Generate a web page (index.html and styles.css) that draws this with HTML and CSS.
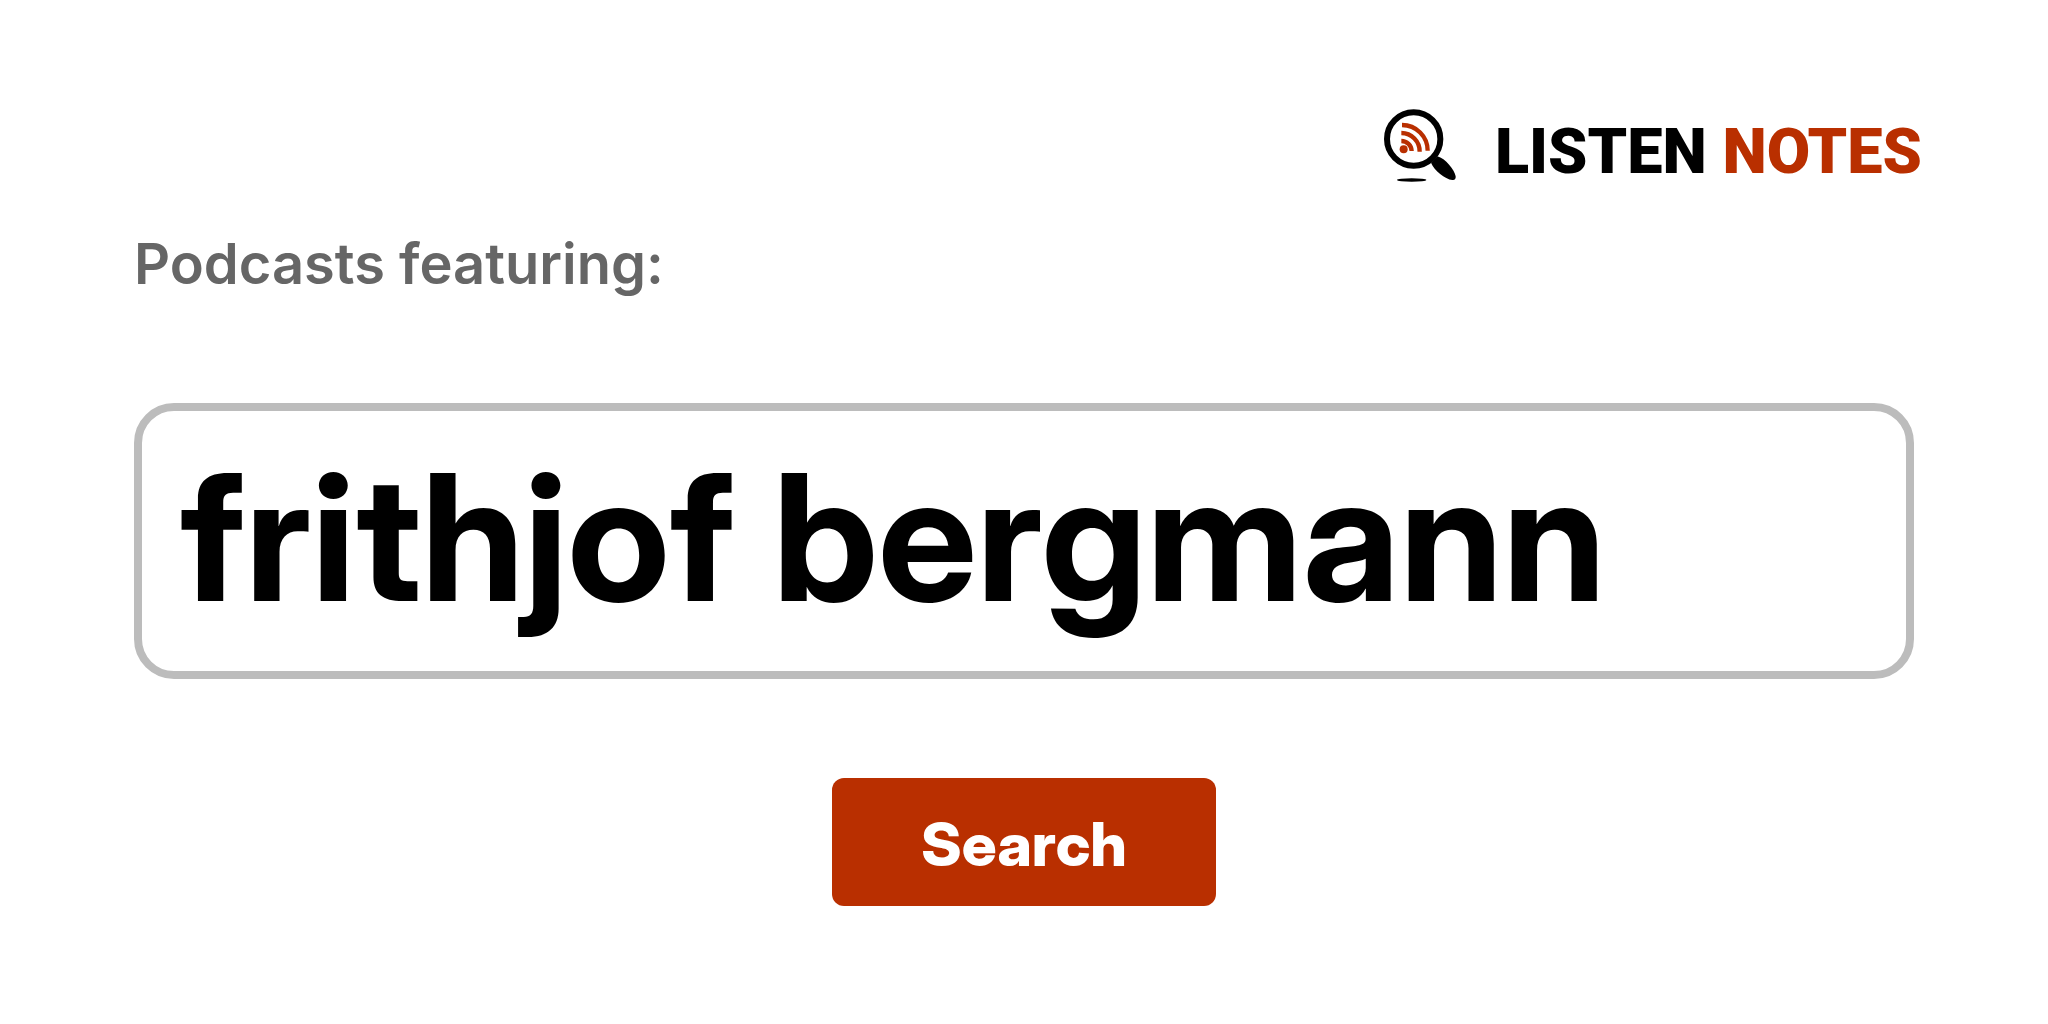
FILE: index.html
```html
<!DOCTYPE html>
<html lang="en">
<head>
<meta charset="utf-8">
<meta name="viewport" content="width=device-width, initial-scale=1">
<title>Podcasts featuring: frithjof bergmann - Listen Notes</title>
<link rel="stylesheet" href="styles.css">
</head>
<body>
<header class="header">
  <a class="logo" href="#" aria-label="Listen Notes">
    <svg class="logo-icon" viewBox="42 42 216 219" aria-hidden="true">
      <path d="M183 203L202 184C226 190 254 225 257 244C258 252 254 256 247 255C225 252 193 227 183 203Z"/>
      <circle cx="131" cy="132" r="80" fill="#fff" stroke="#000" stroke-width="18"/>
      <ellipse cx="125" cy="255" rx="44" ry="5"/>
      <g fill="none" stroke="#b92f00" stroke-width="13">
        <path d="M96 90A77 77 0 0 1 173 167"/>
        <path d="M94 114A55 55 0 0 1 149 170"/>
        <path d="M94 138A31 31 0 0 1 125 168"/>
      </g>
      <circle cx="101" cy="163" r="12" fill="#b92f00"/>
    </svg>
    <span class="logo-text">LISTEN <span class="logo-accent">NOTES</span></span>
  </a>
</header>
<main>
  <form class="search">
    <label class="search-label" for="query">Podcasts featuring:</label>
    <input class="search-input" id="query" type="text" value="frithjof bergmann">
    <button class="search-button" type="submit">Search</button>
  </form>
</main>
</body>
</html>
```
FILE: styles.css
```css
* {
  box-sizing: border-box;
}

body {
  margin: 0;
  background: #fff;
  color: #000;
  font-family: Inter, "Liberation Sans", sans-serif;
}

.header {
  display: flex;
  justify-content: flex-end;
  padding: 109px 126px 0;
}

.logo {
  display: flex;
  align-items: flex-start;
  gap: 39px;
  color: inherit;
  text-decoration: none;
}

.logo-icon {
  width: 72px;
  height: 73px;
}

.logo-text {
  font-family: Roboto, sans-serif;
  font-size: 63px;
  font-weight: 900;
  line-height: 86px;
  white-space: nowrap;
}

.logo-accent {
  color: #b92f00;
}

.search {
  display: flex;
  flex-direction: column;
  padding: 35px 134px 64px;
}

.search-label {
  color: #666;
  font-size: 56px;
  font-weight: 600;
  line-height: 68px;
}

.search-input {
  width: 100%;
  margin: 105px 0 99px;
  padding: 20px 38px 28px;
  border: 8px solid #bcbcbc;
  border-radius: 40px;
  background: #fff;
  color: #000;
  font-family: "Inter Display", Inter, "Liberation Sans", sans-serif;
  font-size: 176px;
  font-weight: 700;
  line-height: 212px;
}

.search-button {
  align-self: center;
  min-width: 384px;
  padding: 30px 48px 26px;
  border: 0;
  border-radius: 12px;
  background: #b92f00;
  color: #fff;
  font-family: "Inter Display", Inter, "Liberation Sans", sans-serif;
  font-size: 61px;
  font-weight: 800;
  line-height: 72px;
}
```
